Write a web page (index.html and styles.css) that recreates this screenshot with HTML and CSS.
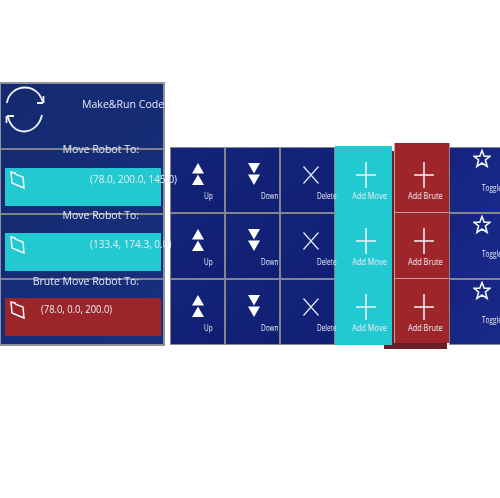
FILE: index.html
```html
<!DOCTYPE html>
<html lang="en">
<head>
<meta charset="UTF-8">
<meta name="viewport" content="width=device-width, initial-scale=1.0">
<title>Robot Program</title>
<link rel="stylesheet" href="styles.css">
</head>
<body>
<svg class="defs" width="0" height="0">
    <symbol id="up" viewBox="0 0 12 22"><path d="M6 0L12 10.500H0zM6 11.500L12 22H0z"/></symbol>
    <symbol id="down" viewBox="0 0 12 22"><path d="M0 0h12L6 10.500zM0 11.500h12L6 22z"/></symbol>
    <symbol id="cross" viewBox="0 0 16 18"><path class="line" d="M.5.5l15 17M15.500.5l-15 17"/></symbol>
    <symbol id="plus" viewBox="0 0 20 26"><path class="line line-plus" d="M10 0v26M0 13h20"/></symbol>
    <symbol id="star" viewBox="0 0 18 20"><path class="line line-star" d="M9 1.500l2.200 5.700h5.800L12.400 11l1.700 6.500L9 14l-5.100 3.500L5.600 11 1 7.200h5.800z"/></symbol>
    <symbol id="folder" viewBox="0 0 16 21"><path class="line line-folder" d="M1 2l4 1 1 1.500 7 2.500 1 11L2 13z"/></symbol>
</svg>

<div class="stage">
    <div class="panel">
        <div class="row row-top">
            <svg class="refresh" viewBox="0 0 40 48" width="40" height="48">
                <path d="M2 17C3 8 11 1.500 20 1.500c8 0 15 5 17.500 14M38 17h-6M38.500 17v-7M37 29c-2 9-9 16.500-18 16.500-8 0-14-6-16-14.500M2 30h7M1.500 30v7"/>
            </svg>
            <span class="run">Make&amp;Run Code</span>
        </div>
        <div class="row">
            <div class="head">Move Robot To:</div>
            <div class="bar bar-move">
                <svg class="folder"><use href="#folder"/></svg>
                <span class="coords">(78.0, 200.0, 145.0)</span>
            </div>
        </div>
        <div class="row">
            <div class="head">Move Robot To:</div>
            <div class="bar bar-move">
                <svg class="folder"><use href="#folder"/></svg>
                <span class="coords">(133.4, 174.3, 0.0)</span>
            </div>
        </div>
        <div class="row row-last">
            <div class="head">Brute Move Robot To:</div>
            <div class="bar bar-brute">
                <svg class="folder"><use href="#folder"/></svg>
                <span class="coords coords-brute">(78.0, 0.0, 200.0)</span>
            </div>
        </div>
    </div>

    <div class="actions">
        <div class="col col-up">
            <div class="tile"><svg><use href="#up"/></svg><span class="label">Up</span></div>
            <div class="tile"><svg><use href="#up"/></svg><span class="label">Up</span></div>
            <div class="tile"><svg><use href="#up"/></svg><span class="label">Up</span></div>
        </div>
        <div class="col col-down">
            <div class="tile"><svg><use href="#down"/></svg><span class="label">Down</span></div>
            <div class="tile"><svg><use href="#down"/></svg><span class="label">Down</span></div>
            <div class="tile"><svg><use href="#down"/></svg><span class="label">Down</span></div>
        </div>
        <div class="col col-delete">
            <div class="tile"><svg><use href="#cross"/></svg><span class="label">Delete</span></div>
            <div class="tile"><svg><use href="#cross"/></svg><span class="label">Delete</span></div>
            <div class="tile"><svg><use href="#cross"/></svg><span class="label">Delete</span></div>
        </div>
        <div class="col col-move">
            <div class="tile"><svg><use href="#plus"/></svg><span class="label">Add Move</span></div>
            <div class="tile"><svg><use href="#plus"/></svg><span class="label">Add Move</span></div>
            <div class="tile"><svg><use href="#plus"/></svg><span class="label">Add Move</span></div>
        </div>
        <div class="col col-brute">
            <div class="tile"><svg><use href="#plus"/></svg><span class="label">Add Brute</span></div>
            <div class="tile"><svg><use href="#plus"/></svg><span class="label">Add Brute</span></div>
            <div class="tile"><svg><use href="#plus"/></svg><span class="label">Add Brute</span></div>
        </div>
        <div class="col col-toggle">
            <div class="tile"><svg><use href="#star"/></svg><span class="label">Toggle</span></div>
            <div class="tile"><svg><use href="#star"/></svg><span class="label">Toggle</span></div>
            <div class="tile"><svg><use href="#star"/></svg><span class="label">Toggle</span></div>
        </div>
    </div>
</div>
</body>
</html>
```
FILE: styles.css
```css
html, body {
    margin: 0;
    padding: 0;
    background-color: #fff;
    overflow: hidden;
    height: 498px;
}
.defs {
    display: block;
    height: 0;
}
.stage {
    display: flex;
    align-items: flex-start;
    width: 500px;
    height: 416px;
    padding-top: 82px;
    overflow: hidden;
    font-family: "Open Sans", "Noto Sans", sans-serif;
    color: #e8ebf4;
    filter: blur(0.7px);
}
.line {
    fill: none;
    stroke: #e6ecf5;
    stroke-width: 1.2;
}
.line-plus {
    stroke: #f0f4f8;
    stroke-width: 1.5;
}
.line-star {
    stroke: #f0f4f8;
    stroke-width: 1.6;
}
.line-folder {
    stroke: #f4f6fa;
    stroke-width: 1.5;
}

/* left program list */
.panel {
    position: relative;
    z-index: 3;
    flex: none;
    box-sizing: border-box;
    width: 165px;
    height: 264px;
    background: linear-gradient(135deg, #14296f, #17307e);
    border: 2px solid #8f929c;
    border-left-width: 1px;
}
.row {
    display: flow-root;
    box-sizing: border-box;
    height: 65px;
    border-bottom: 2px solid #7f828e;
}
.row-top {
    display: flex;
    height: 66px;
    padding: 2px 0 0 4px;
}
.row-last {
    height: 64px;
    border-bottom: 0;
}
.refresh {
    flex: none;
}
.refresh path {
    fill: none;
    stroke: #f2f4f8;
    stroke-width: 1.8;
}
.run {
    margin: 9px 0 0 37px;
    font-size: 11px;
    line-height: 18px;
    white-space: nowrap;
    transform: scaleX(0.96);
    transform-origin: left;
}
.head {
    height: 17px;
    margin: -9px 0 10px;
    padding-right: 24px;
    font-size: 10.5px;
    line-height: 17px;
    text-align: right;
    white-space: nowrap;
}
.row:nth-child(3) .head {
    margin: -8px 0 9px;
}
.row:nth-child(4) .head {
    margin: -7px 0 8px;
}
.bar {
    display: flex;
    height: 38px;
    margin: 0 2px 0 4px;
    padding: 2px 0 0 5px;
    box-sizing: border-box;
}
.bar-move {
    background-color: #22c9d0;
}
.bar-brute {
    background-color: #9c2529;
}
.folder {
    flex: none;
    width: 16px;
    height: 21px;
}
.coords {
    margin: 2px 0 0 64px;
    font-size: 10px;
    line-height: 14px;
    white-space: nowrap;
}
.coords-brute {
    margin-left: 15px;
    transform: scaleX(0.94);
    transform-origin: left;
}

/* action tiles */
.actions {
    display: flex;
    flex: none;
    margin-left: 5px;
}
.col {
    position: relative;
    flex: none;
    width: 55px;
    margin-top: 65px;
}
.tile {
    display: flex;
    flex-direction: column;
    align-items: flex-start;
    box-sizing: border-box;
    height: 66px;
    background: linear-gradient(135deg, #142478, #101f73);
    border: 1px solid #83858f;
}
.tile svg {
    flex: none;
    display: block;
}
.label {
    font-size: 9px;
    line-height: 12px;
    white-space: nowrap;
    transform: scaleX(0.72);
    transform-origin: left;
}
.col-up svg, .col-down svg {
    width: 12px;
    height: 22px;
    margin-top: 15px;
    fill: #fff;
}
.col-up svg {
    margin-left: 21px;
}
.col-down svg {
    margin-left: 22px;
}
.col-up .label {
    margin: 5px 0 0 33px;
}
.col-down .label {
    margin: 5px 0 0 35px;
}
.col-delete {
    z-index: 2;
}
.col-delete svg {
    width: 16px;
    height: 18px;
    margin: 18px 0 0 22px;
}
.col-delete .label {
    margin: 6px 0 0 36px;
}
.col-move {
    z-index: 1;
    width: 57px;
    height: 199px;
    margin-top: 64px;
    background-color: #22c9d0;
}
.col-move .tile {
    background: transparent;
    border: 0;
}
.col-move svg, .col-brute svg {
    width: 20px;
    height: 26px;
}
.col-move svg {
    margin: 16px 0 0 21px;
}
.col-move .label {
    margin: 2px 0 0 17px;
    transform: scaleX(0.82);
}
.col-brute {
    z-index: 0;
    width: 56px;
    margin: 61px 0 0 2px;
}
.col-brute::before {
    content: "";
    position: absolute;
    z-index: -1;
    left: -10px;
    right: 3px;
    top: 8px;
    bottom: -4px;
    background-color: #6a1e28;
}
.col-brute .tile {
    background-color: #9e2529;
    background-image: none;
    border-color: #c3a0a4;
    border-bottom: 0;
    border-top: 1px solid #c3a0a4;
}
.col-brute svg {
    margin: 15px 0 0 19px;
}
.col-brute .label {
    margin: 2px 0 0 13px;
    transform: scaleX(0.82);
}
.col-brute .tile:first-child {
    height: 69px;
    border-top: 0;
}
.col-brute .tile:first-child svg {
    margin-top: 19px;
}
.col-brute .tile:last-child {
    height: 65px;
}
.col-toggle {
    margin-left: -1px;
    width: 60px;
}
.col-toggle .tile {
    background: linear-gradient(135deg, #16237f, #1a2a8a);
}
.col-toggle svg {
    width: 18px;
    height: 20px;
    margin: 1px 0 0 23px;
}
.col-toggle .label {
    margin: 13px 0 0 32px;
}
```
